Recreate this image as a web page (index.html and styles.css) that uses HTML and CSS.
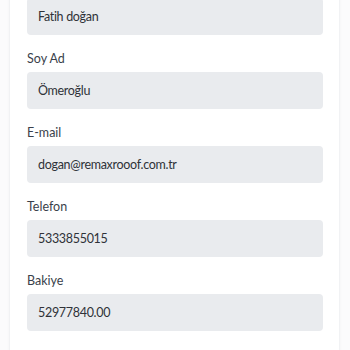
FILE: index.html
```html
<!DOCTYPE html>
<html lang="tr">
<head>
  <meta charset="UTF-8">
  <title>Profil</title>
  <link rel="stylesheet" href="styles.css">
</head>
<body>

  <form class="profil-form" autocomplete="off">
    <div class="form-group">
      <label for="ad">Ad</label>
      <input type="text" id="ad" name="ad" value="Fatih doğan" readonly>
    </div>

    <div class="form-group">
      <label for="soyad">Soy Ad</label>
      <input type="text" id="soyad" name="soyad" value="Ömeroğlu" readonly>
    </div>

    <div class="form-group">
      <label for="email">E-mail</label>
      <input type="email" id="email" name="email" value="dogan@remaxrooof.com.tr" readonly>
    </div>

    <div class="form-group">
      <label for="telefon">Telefon</label>
      <input type="text" id="telefon" name="telefon" value="5333855015" readonly>
    </div>

    <div class="form-group">
      <label for="bakiye">Bakiye</label>
      <input type="text" id="bakiye" name="bakiye" value="52977840.00" readonly>
    </div>
  </form>

</body>
</html>
```

FILE: styles.css
```css
body {
  font-family: Lato, "Noto Sans", sans-serif;
  background-color: #fbfbfc;
  margin: 0;
  overflow: hidden;
}

.profil-form {
  background-color: #ffffff;
  margin: -46px 10px 0 9px;
  padding: 22px 16px 20px 17px;
  border-left: 1px solid #f1f2f4;
  border-right: 1px solid #f1f2f4;
  box-shadow: 0 0 4px rgba(0, 0, 0, 0.03);
}

.form-group {
  margin-bottom: 15px;
}

label {
  display: block;
  margin-bottom: 4px;
  font-size: 12.5px;
  line-height: 18px;
  color: #3a3f4b;
}

input[type="text"],
input[type="email"] {
  display: block;
  box-sizing: border-box;
  width: 100%;
  height: 37px;
  padding: 0 11px;
  border: none;
  border-radius: 4px;
  background-color: #e9ebee;
  font-family: inherit;
  font-size: 12.5px;
  letter-spacing: -0.3px;
  color: #2f3238;
  outline: none;
}
```
